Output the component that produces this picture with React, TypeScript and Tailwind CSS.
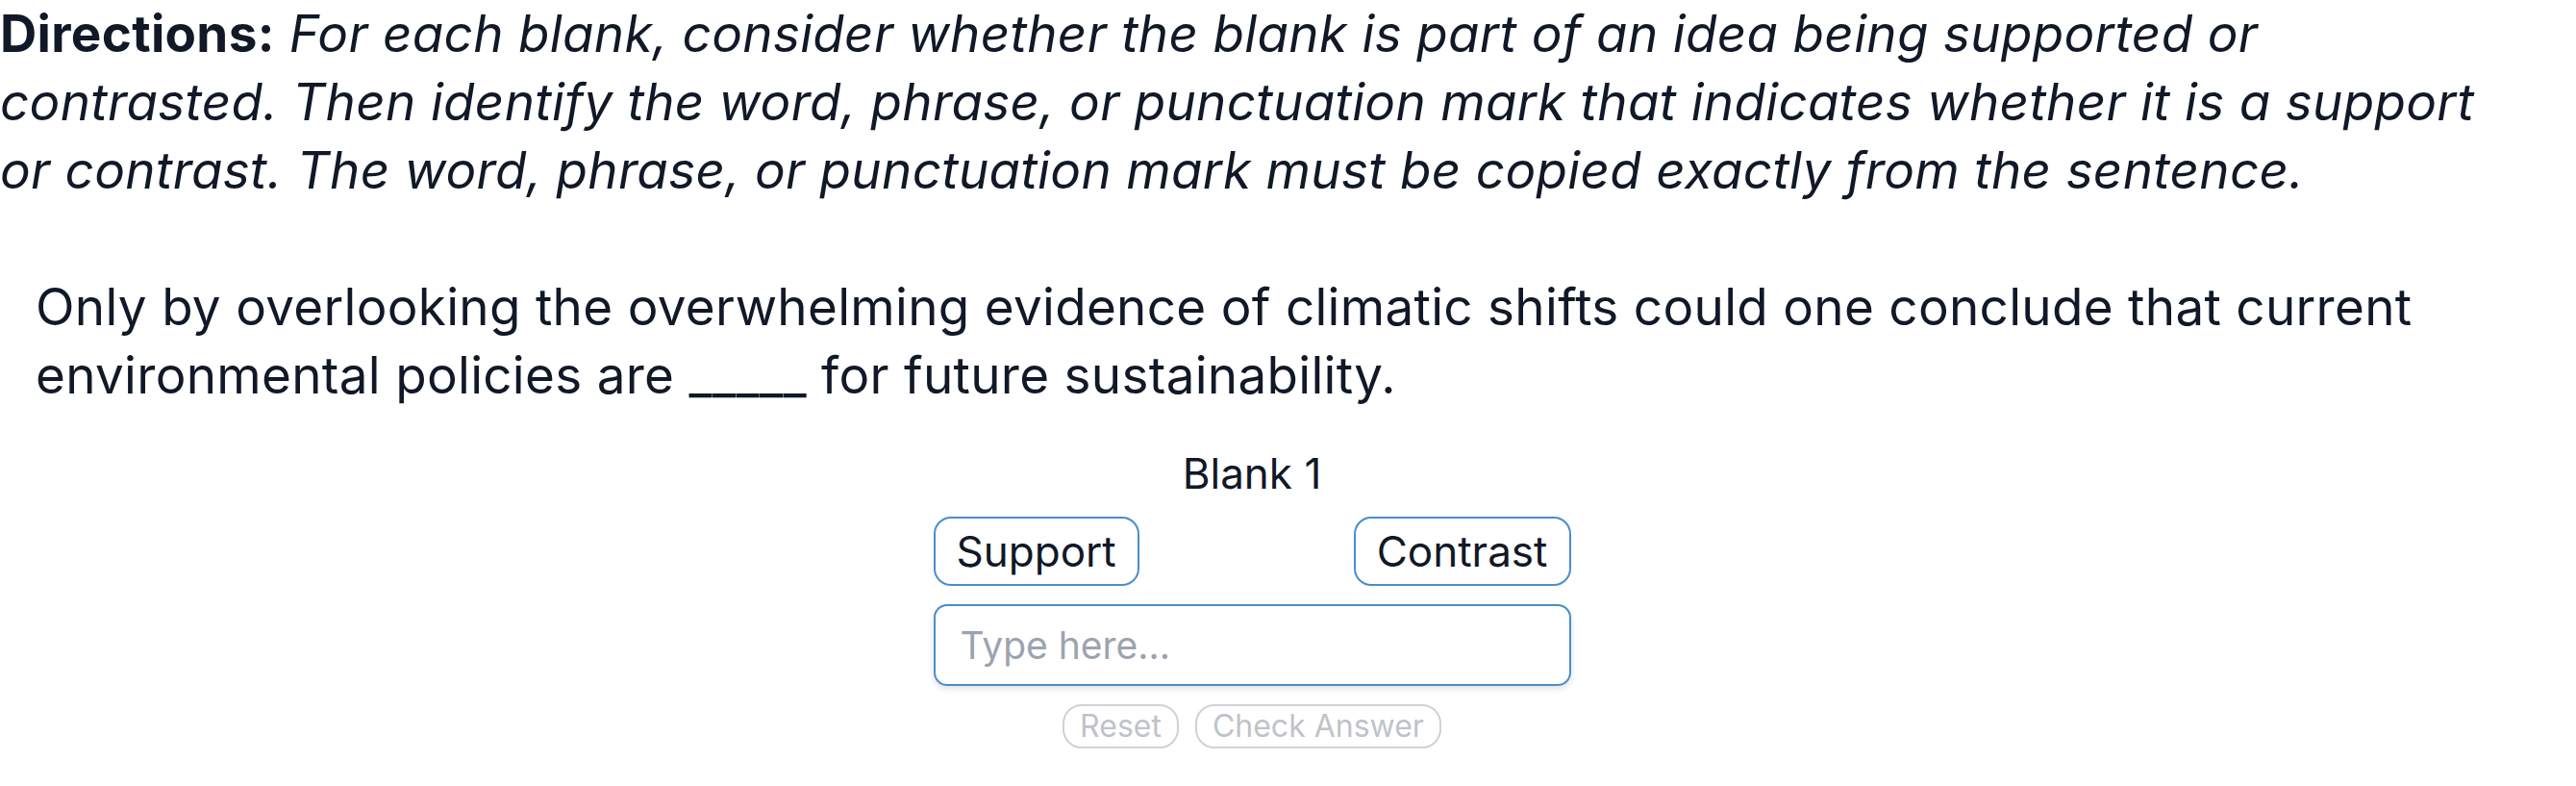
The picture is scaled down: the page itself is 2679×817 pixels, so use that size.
import { useState } from 'react';

const FONT = 'font-["Inter","Noto_Sans",sans-serif]';

export default function App() {
  const [answer, setAnswer] = useState('');
  const [choice, setChoice] = useState<'support' | 'contrast' | null>(null);

  return (
    <div className={`${FONT} w-[2604px] bg-white text-[#111827]`}>
      <p className="text-[53px] leading-[71px] tracking-[0.3px]">
        <span className="font-bold">Directions:</span>{' '}
        <em>
          For each blank, consider whether the blank is part of an idea being supported or contrasted. Then
          identify the word, phrase, or punctuation mark that indicates whether it is a support or contrast.
          The word, phrase, or punctuation mark must be copied exactly from the sentence.
        </em>
      </p>

      <p className="mt-[71px] pl-[37px] text-[53px] leading-[71px] tracking-[0.3px]">
        Only by overlooking the overwhelming evidence of climatic shifts could one conclude that current
        environmental policies are _____ for future sustainability.
      </p>

      <div className="mx-auto mt-[35px] flex w-[663px] flex-col items-center">
        <div className="text-[44px] leading-[62px]">Blank 1</div>

        <div className="mt-[14px] flex w-full justify-between">
          <button
            type="button"
            onClick={() => setChoice('support')}
            className={`h-[72px] rounded-[18px] border-2 border-[#4a8dcc] px-[22px] text-[44px] ${
              choice === 'support' ? 'bg-[#eaf3fb]' : 'bg-white'
            }`}
          >
            Support
          </button>
          <button
            type="button"
            onClick={() => setChoice('contrast')}
            className={`h-[72px] rounded-[18px] border-2 border-[#4a8dcc] px-[22px] text-[44px] ${
              choice === 'contrast' ? 'bg-[#eaf3fb]' : 'bg-white'
            }`}
          >
            Contrast
          </button>
        </div>

        <input
          value={answer}
          onChange={(e) => setAnswer(e.target.value)}
          placeholder="Type here..."
          className="mt-[19px] h-[85px] w-full rounded-[14px] border-2 border-[#4a8dcc] px-[26px] text-[39px] shadow-[0_3px_6px_rgba(0,0,0,0.12)] outline-none placeholder:text-[#9ca3af]"
        />

        <div className="mt-[19px] flex gap-[17px]">
          <button
            type="button"
            disabled
            className="h-[46px] rounded-[20px] border-2 border-[#cfd2d6] px-[16px] text-[32px] leading-none text-[#bfc3c9]"
          >
            Reset
          </button>
          <button
            type="button"
            disabled
            className="h-[46px] rounded-[20px] border-2 border-[#cfd2d6] px-[16px] text-[32px] leading-none text-[#bfc3c9]"
          >
            Check Answer
          </button>
        </div>
      </div>
    </div>
  );
}
